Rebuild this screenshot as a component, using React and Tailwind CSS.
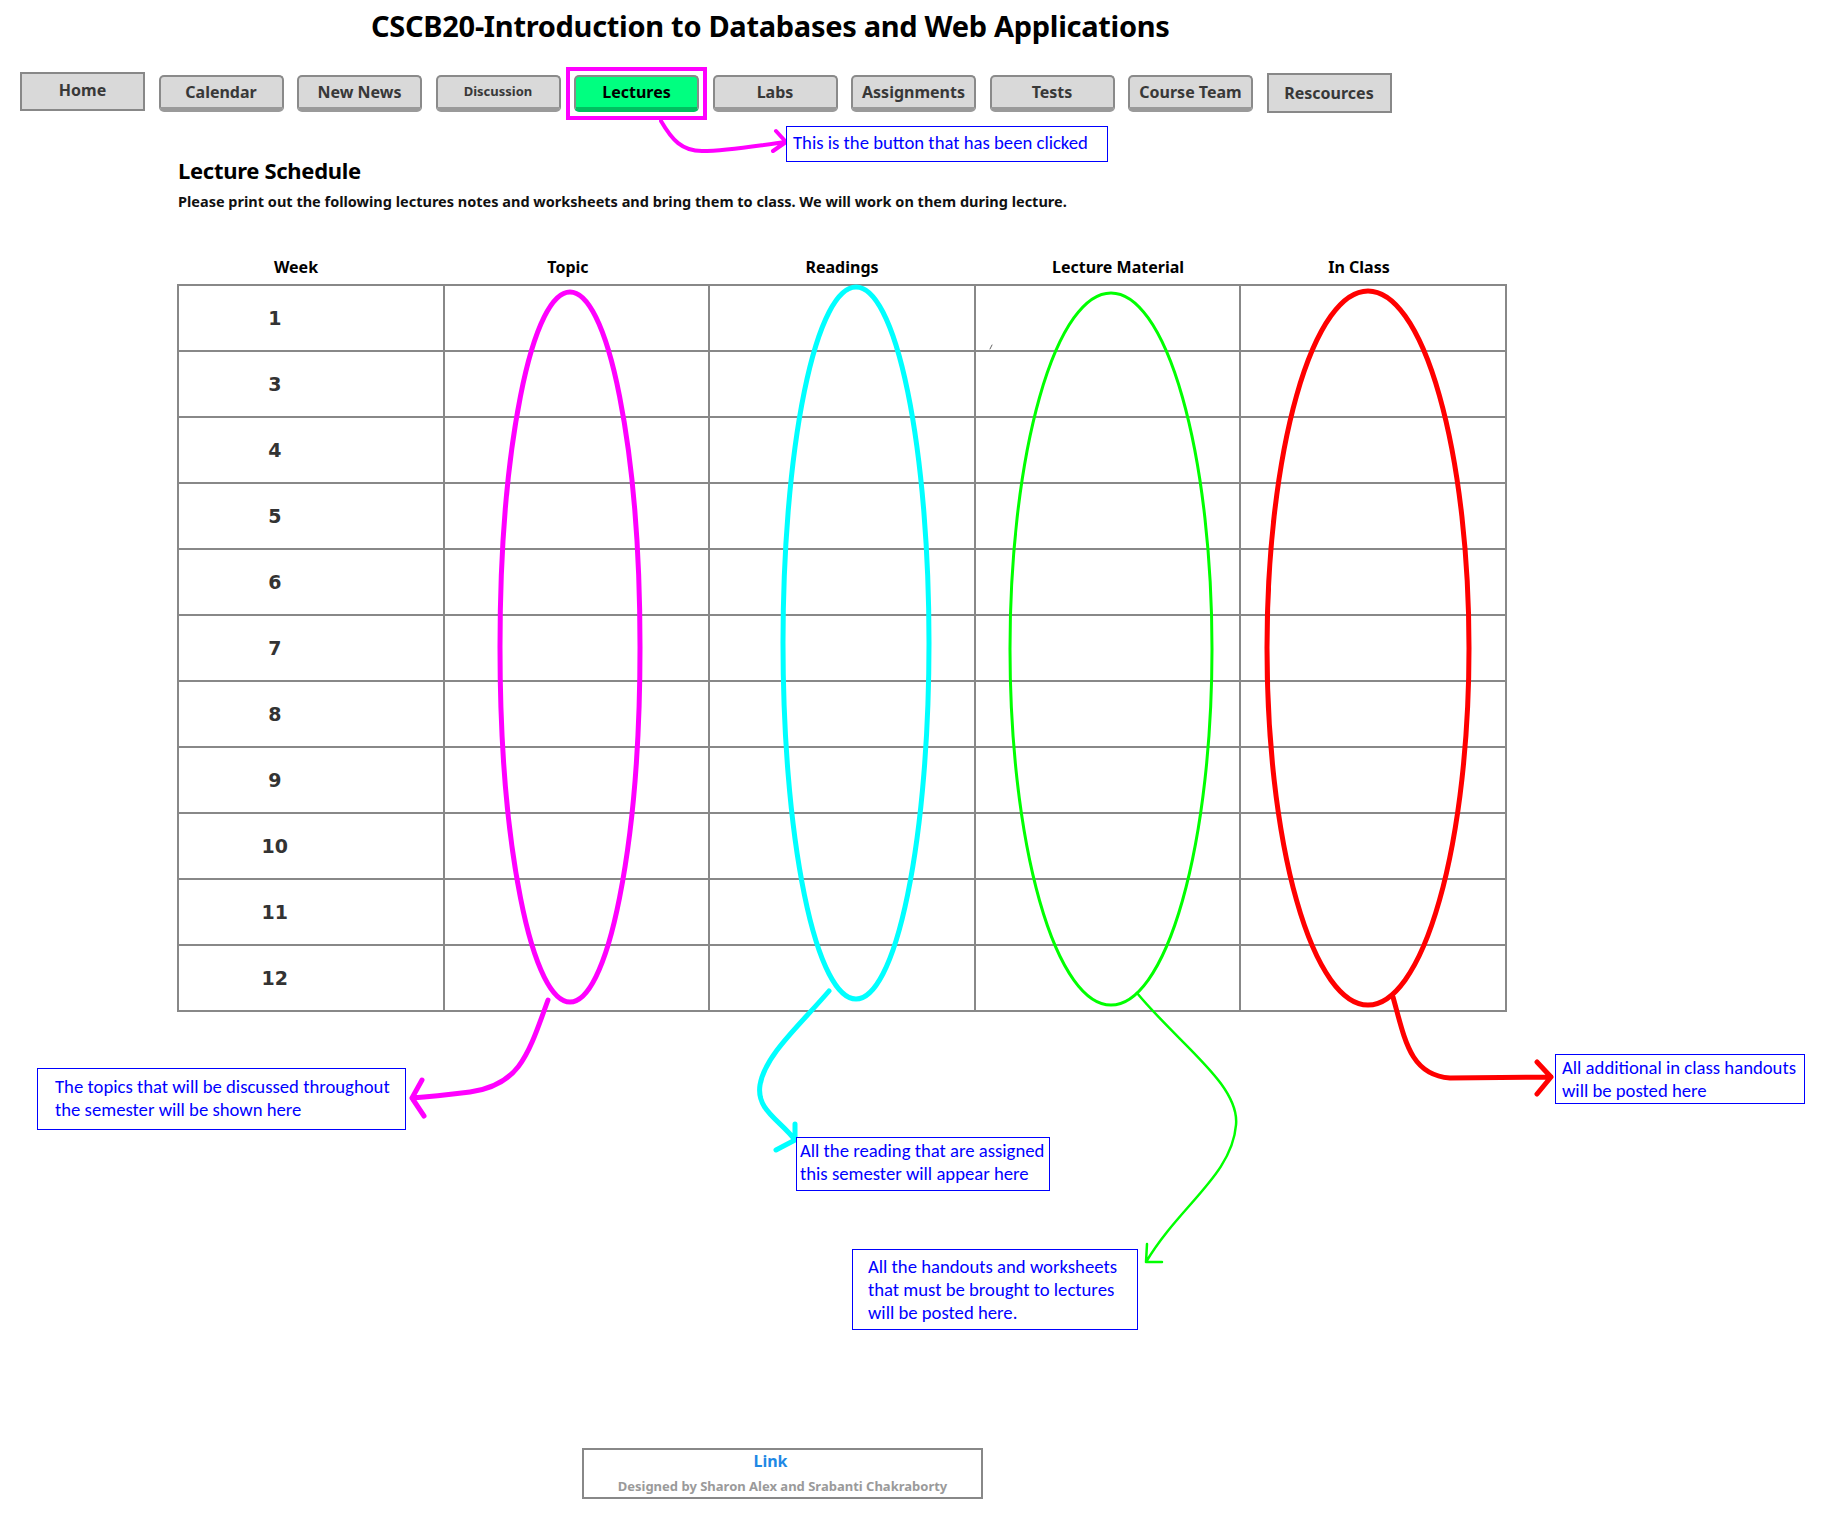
import React from "react";

const navItems = [
  { label: "Home", kind: "square" },
  { label: "Calendar", kind: "round" },
  { label: "New News", kind: "round" },
  { label: "Discussion", kind: "round", small: true },
  { label: "Lectures", kind: "active" },
  { label: "Labs", kind: "round" },
  { label: "Assignments", kind: "round" },
  { label: "Tests", kind: "round" },
  { label: "Course Team", kind: "round" },
  { label: "Rescources", kind: "square2" },
];

const weeks = ["1", "3", "4", "5", "6", "7", "8", "9", "10", "11", "12"];
const headers = [
  { label: "Week", cls: "pr-[28px]" },
  { label: "Topic", cls: "pr-[16px]" },
  { label: "Readings", cls: "" },
  { label: "Lecture Material", cls: "pl-[20px]" },
  { label: "In Class", cls: "pr-[30px]" },
];

function NavButton({ item }) {
  const base =
    "w-[125px] flex items-center justify-center font-bold text-[#383838] shrink-0 " +
    (item.small ? "text-[13px]" : "text-[16px]");
  if (item.kind === "square") {
    return (
      <div className={base + " h-[39px] pb-[4px] border-2 border-[#888] bg-[#d9d9d9]"}>
        {item.label}
      </div>
    );
  }
  if (item.kind === "square2") {
    return (
      <div className={base + " mt-[1px] h-[40px] border-2 border-[#888] bg-[#d9d9d9]"}>
        {item.label}
      </div>
    );
  }
  if (item.kind === "active") {
    return (
      <div className="-mx-[8px] -mt-[5px] -mb-[8px] p-[4px] border-4 border-[#ff00ff] shrink-0">
        <div
          className={
            base +
            " h-[37px] rounded-[5px] border-2 border-b-[5px] border-[#8a8a8a] border-b-[#00c060] bg-[#00ff80] text-black"
          }
        >
          {item.label}
        </div>
      </div>
    );
  }
  return (
    <div
      className={
        base +
        " mt-[3px] h-[37px] rounded-[5px] border-2 border-b-[5px] border-[#8a8a8a] border-b-[#9a9a9a] bg-[#d9d9d9]"
      }
    >
      {item.label}
    </div>
  );
}

function Note({ className, children }) {
  return (
    <div
      className={
        "absolute border-[1.5px] border-[#0000ff] bg-white text-[#0000ff] text-[18.7px] leading-[23px] whitespace-nowrap font-['Carlito','Noto_Sans',sans-serif] " +
        className
      }
    >
      {children}
    </div>
  );
}

export default function App() {
  return (
    <div className="relative w-[1828px] h-[1520px] bg-white font-['Noto_Sans','Open_Sans',sans-serif] text-black overflow-hidden">
      <h1 className="pt-[7px] pl-[371px] text-[29px] leading-[38px] font-bold tracking-[-0.3px]">
        CSCB20-Introduction to Databases and Web Applications
      </h1>

      <nav className="mt-[27px] pl-[20px] flex items-start gap-[13.5px]">
        {navItems.map((item) => (
          <NavButton key={item.label} item={item} />
        ))}
      </nav>

      <section className="pl-[178px] pt-[42px]">
        <h2 className="text-[22px] leading-[30px] font-bold tracking-[-0.3px]">
          Lecture Schedule
        </h2>
        <p className="mt-[6px] text-[14.5px] leading-[20px] font-bold text-[#111]">
          Please print out the following lectures notes and worksheets and bring them to class. We
          will work on them during lecture.
        </p>
      </section>

      <div className="ml-[177px] mt-[39px] w-[1330px]">
        <div className="grid grid-cols-5 h-[34px] items-center">
          {headers.map((h) => (
            <div key={h.label} className={"text-center text-[16px] font-bold " + h.cls}>
              {h.label}
            </div>
          ))}
        </div>
        <table className="w-[1330px] border-collapse border-2 border-[#888] table-fixed">
          <tbody>
            {weeks.map((w) => (
              <tr key={w} className="h-[66px]">
                <td className="border-2 border-[#888] text-center pr-[72px] text-[19px] font-['DejaVu_Sans',sans-serif] font-bold text-[#333]">
                  {w}
                </td>
                <td className="border-2 border-[#888]"></td>
                <td className="border-2 border-[#888]"></td>
                <td className="border-2 border-[#888]"></td>
                <td className="border-2 border-[#888]"></td>
              </tr>
            ))}
          </tbody>
        </table>
      </div>

      <footer className="absolute left-[582px] top-[1448px] w-[401px] h-[51px] border-2 border-[#888] flex flex-col items-center">
        <a className="pr-[24px] text-[16px] leading-[22px] font-bold text-[#1e88e5]">Link</a>
        <div className="mt-[5px] text-[13px] leading-[18px] font-bold text-[#9a9a9a]">
          Designed by Sharon Alex and Srabanti Chakraborty
        </div>
      </footer>

      <svg
        className="absolute inset-0 pointer-events-none"
        width="1828"
        height="1520"
        viewBox="0 0 1828 1520"
        fill="none"
        strokeLinecap="round"
        strokeLinejoin="round"
      >
        <ellipse cx="570" cy="647" rx="70" ry="355" stroke="#ff00ff" strokeWidth="5" />
        <ellipse cx="856" cy="643" rx="73" ry="356" stroke="#00ffff" strokeWidth="5" />
        <ellipse cx="1111" cy="649" rx="101" ry="356" stroke="#00ff00" strokeWidth="3" />
        <ellipse cx="1368" cy="648" rx="101" ry="357" stroke="#ff0000" strokeWidth="5" />
        <path d="M990 349 L992 345" stroke="#666" strokeWidth="1" />

        <path
          d="M661 121 C672 140 682 151 702 151 C730 151 760 145 786 142 M786 142 L776 131 M786 142 L773 151"
          stroke="#ff00ff"
          strokeWidth="4"
        />
        <path
          d="M548 1000 C528 1055 520 1085 470 1092 C445 1095 425 1097 412 1098 M412 1098 L422 1080 M412 1098 L424 1116"
          stroke="#ff00ff"
          strokeWidth="5"
        />
        <path
          d="M829 991 C800 1025 765 1055 760 1085 C756 1110 780 1120 795 1140 M795 1140 L795 1124 M795 1140 L776 1150"
          stroke="#00ffff"
          strokeWidth="5"
        />
        <path
          d="M1137 993 C1180 1045 1240 1085 1236 1125 C1232 1175 1180 1205 1146 1262 M1146 1262 L1147 1244 M1146 1262 L1162 1262"
          stroke="#00ff00"
          strokeWidth="2.5"
        />
        <path
          d="M1393 997 C1405 1040 1410 1075 1450 1078 L1551 1077 M1551 1077 L1537 1062 M1551 1077 L1537 1094"
          stroke="#ff0000"
          strokeWidth="5"
        />
      </svg>

      <Note className="left-[786px] top-[126px] w-[322px] h-[36px] pl-[6px] pt-[4px]">
        This is the button that has been clicked
      </Note>
      <Note className="left-[37px] top-[1068px] w-[369px] h-[62px] pl-[17px] pt-[6px]">
        The topics that will be discussed throughout
        <br />
        the semester will be shown here
      </Note>
      <Note className="left-[796px] top-[1137px] w-[254px] h-[54px] pl-[3px] pt-[1px]">
        All the reading that are assigned
        <br />
        this semester will appear here
      </Note>
      <Note className="left-[852px] top-[1249px] w-[286px] h-[81px] pl-[15px] pt-[5px]">
        All the handouts and worksheets
        <br />
        that must be brought to lectures
        <br />
        will be posted here.
      </Note>
      <Note className="left-[1555px] top-[1054px] w-[250px] h-[50px] pl-[6px] pt-[1px]">
        All additional in class handouts
        <br />
        will be posted here
      </Note>
    </div>
  );
}
